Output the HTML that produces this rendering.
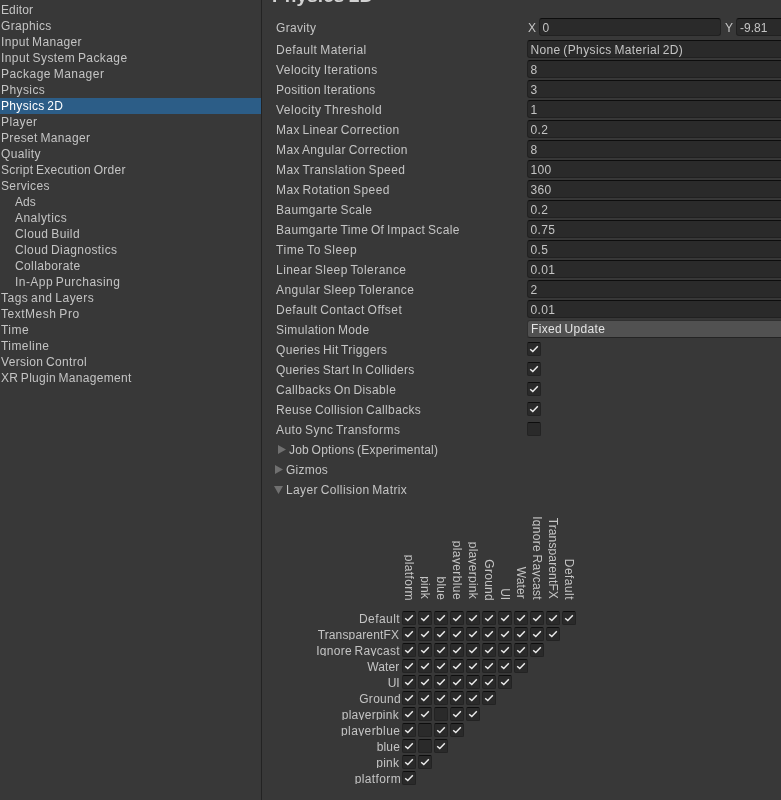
<!DOCTYPE html>
<html><head><meta charset="utf-8"><title>Project Settings</title>
<style>
html,body{margin:0;padding:0;}
body{will-change:transform;word-spacing:-1px;width:781px;height:800px;overflow:hidden;background:#383838;position:relative;font-family:"Liberation Sans",sans-serif;font-size:12px;color:#c4c4c4;}
.abs{position:absolute;}
.side{position:absolute;left:0;top:0;width:261px;height:800px;background:#383838;}
.div{position:absolute;left:261px;top:0;width:1px;height:800px;background:#232323;}
.si{position:absolute;left:0;width:261px;height:16px;line-height:16px;white-space:nowrap;letter-spacing:0.32px;}
.si.sel{background:#2c5d87;color:#ffffff;}
.lbl{position:absolute;left:276px;height:18px;line-height:18px;white-space:nowrap;letter-spacing:0.32px;}
.fld{position:absolute;left:527px;width:260px;height:16px;line-height:18px;border:1px solid #212121;border-top-color:#0d0d0d;border-radius:3px;background:#2a2a2a;padding-left:2.5px;box-sizing:content-box;white-space:nowrap;letter-spacing:0.32px;}
.dd{position:absolute;left:527px;width:260px;height:16px;line-height:17px;border:1px solid #303030;border-bottom-color:#242424;border-radius:3px;background:#515151;padding-left:3px;white-space:nowrap;color:#e4e4e4;letter-spacing:0.32px;}
.cb{position:absolute;width:12px;height:12px;border:1px solid #232323;border-top-color:#0d0d0d;border-radius:2px;background:#2a2a2a;}
.cb svg{position:absolute;left:-1px;top:-1px;}
.title{position:absolute;left:272px;top:-15px;letter-spacing:0.1px;font-size:19px;font-weight:bold;line-height:22px;color:#d2d2d2;white-space:nowrap;}
.tri{position:absolute;width:0;height:0;}
.rl{position:absolute;right:0;height:12.5px;line-height:16px;white-space:nowrap;letter-spacing:0.32px;overflow:hidden;}
.cl{position:absolute;height:12.5px;line-height:16px;white-space:nowrap;letter-spacing:0.32px;transform-origin:0 0;transform:rotate(90deg);overflow:hidden;}
</style></head><body>
<div class="side">
<div class="si" style="top:2px;padding-left:1px;box-sizing:border-box;letter-spacing:0.120px;">Editor</div>
<div class="si" style="top:18px;padding-left:1px;box-sizing:border-box;letter-spacing:0.320px;">Graphics</div>
<div class="si" style="top:34px;padding-left:1px;box-sizing:border-box;letter-spacing:0.337px;">Input Manager</div>
<div class="si" style="top:50px;padding-left:1px;box-sizing:border-box;letter-spacing:0.425px;">Input System Package</div>
<div class="si" style="top:66px;padding-left:1px;box-sizing:border-box;letter-spacing:0.463px;">Package Manager</div>
<div class="si" style="top:82px;padding-left:1px;box-sizing:border-box;letter-spacing:0.420px;">Physics</div>
<div class="si sel" style="top:98px;padding-left:1px;box-sizing:border-box;letter-spacing:0.320px;">Physics 2D</div>
<div class="si" style="top:114px;padding-left:1px;box-sizing:border-box;letter-spacing:0.400px;">Player</div>
<div class="si" style="top:130px;padding-left:1px;box-sizing:border-box;letter-spacing:0.351px;">Preset Manager</div>
<div class="si" style="top:146px;padding-left:1px;box-sizing:border-box;letter-spacing:0.353px;">Quality</div>
<div class="si" style="top:162px;padding-left:1px;box-sizing:border-box;letter-spacing:0.272px;">Script Execution Order</div>
<div class="si" style="top:178px;padding-left:1px;box-sizing:border-box;letter-spacing:0.349px;">Services</div>
<div class="si" style="top:194px;padding-left:15px;box-sizing:border-box;letter-spacing:0.020px;">Ads</div>
<div class="si" style="top:210px;padding-left:15px;box-sizing:border-box;letter-spacing:0.470px;">Analytics</div>
<div class="si" style="top:226px;padding-left:15px;box-sizing:border-box;letter-spacing:0.420px;">Cloud Build</div>
<div class="si" style="top:242px;padding-left:15px;box-sizing:border-box;letter-spacing:0.395px;">Cloud Diagnostics</div>
<div class="si" style="top:258px;padding-left:15px;box-sizing:border-box;letter-spacing:0.380px;">Collaborate</div>
<div class="si" style="top:274px;padding-left:15px;box-sizing:border-box;letter-spacing:0.445px;">In-App Purchasing</div>
<div class="si" style="top:290px;padding-left:1px;box-sizing:border-box;letter-spacing:0.477px;">Tags and Layers</div>
<div class="si" style="top:306px;padding-left:1px;box-sizing:border-box;letter-spacing:0.520px;">TextMesh Pro</div>
<div class="si" style="top:322px;padding-left:1px;box-sizing:border-box;letter-spacing:0.453px;">Time</div>
<div class="si" style="top:338px;padding-left:1px;box-sizing:border-box;letter-spacing:0.434px;">Timeline</div>
<div class="si" style="top:354px;padding-left:1px;box-sizing:border-box;letter-spacing:0.334px;">Version Control</div>
<div class="si" style="top:370px;padding-left:1px;box-sizing:border-box;letter-spacing:0.288px;">XR Plugin Management</div>
</div><div class="div"></div>
<div class="title">Physics 2D</div>
<div class="lbl" style="top:19px;letter-spacing:0.320px;">Gravity</div>
<div class="lbl" style="left:528px;top:19px">X</div>
<div class="fld" style="left:539px;width:177px;top:18px">0</div>
<div class="lbl" style="left:725px;top:19px">Y</div>
<div class="fld" style="left:736px;width:60px;top:18px;padding-left:3px;letter-spacing:0">-9.81</div>
<div class="lbl" style="top:41px;letter-spacing:0.480px;">Default Material</div>
<div class="fld" style="top:40px;letter-spacing:0.37px">None (Physics Material 2D)</div>
<div class="lbl" style="top:61px;letter-spacing:0.453px;">Velocity Iterations</div>
<div class="fld" style="top:60px;">8</div>
<div class="lbl" style="top:81px;letter-spacing:0.276px;">Position Iterations</div>
<div class="fld" style="top:80px;">3</div>
<div class="lbl" style="top:101px;letter-spacing:0.520px;">Velocity Threshold</div>
<div class="fld" style="top:100px;">1</div>
<div class="lbl" style="top:121px;letter-spacing:0.360px;">Max Linear Correction</div>
<div class="fld" style="top:120px;">0.2</div>
<div class="lbl" style="top:141px;letter-spacing:0.387px;">Max Angular Correction</div>
<div class="fld" style="top:140px;">8</div>
<div class="lbl" style="top:161px;letter-spacing:0.410px;">Max Translation Speed</div>
<div class="fld" style="top:160px;">100</div>
<div class="lbl" style="top:181px;letter-spacing:0.391px;">Max Rotation Speed</div>
<div class="fld" style="top:180px;">360</div>
<div class="lbl" style="top:201px;letter-spacing:0.349px;">Baumgarte Scale</div>
<div class="fld" style="top:200px;">0.2</div>
<div class="lbl" style="top:221px;letter-spacing:0.368px;">Baumgarte Time Of Impact Scale</div>
<div class="fld" style="top:220px;">0.75</div>
<div class="lbl" style="top:241px;letter-spacing:0.553px;">Time To Sleep</div>
<div class="fld" style="top:240px;">0.5</div>
<div class="lbl" style="top:261px;letter-spacing:0.453px;">Linear Sleep Tolerance</div>
<div class="fld" style="top:260px;">0.01</div>
<div class="lbl" style="top:281px;letter-spacing:0.429px;">Angular Sleep Tolerance</div>
<div class="fld" style="top:280px;">2</div>
<div class="lbl" style="top:301px;letter-spacing:0.472px;">Default Contact Offset</div>
<div class="fld" style="top:300px;">0.01</div>
<div class="lbl" style="top:321px;letter-spacing:0.334px;">Simulation Mode</div>
<div class="dd" style="top:320px">Fixed Update</div>
<div class="lbl" style="top:341px;letter-spacing:0.331px;">Queries Hit Triggers</div>
<div class="cb" style="left:527px;top:342px"><svg viewBox="0 0 14 14" width="14" height="14"><path d="M3.2 7.2 L5.8 9.6 L10.8 4.2" fill="none" stroke="#ececec" stroke-width="1.42" stroke-linecap="butt" stroke-linejoin="miter"/></svg></div>
<div class="lbl" style="top:361px;letter-spacing:0.288px;">Queries Start In Colliders</div>
<div class="cb" style="left:527px;top:362px"><svg viewBox="0 0 14 14" width="14" height="14"><path d="M3.2 7.2 L5.8 9.6 L10.8 4.2" fill="none" stroke="#ececec" stroke-width="1.42" stroke-linecap="butt" stroke-linejoin="miter"/></svg></div>
<div class="lbl" style="top:381px;letter-spacing:0.373px;">Callbacks On Disable</div>
<div class="cb" style="left:527px;top:382px"><svg viewBox="0 0 14 14" width="14" height="14"><path d="M3.2 7.2 L5.8 9.6 L10.8 4.2" fill="none" stroke="#ececec" stroke-width="1.42" stroke-linecap="butt" stroke-linejoin="miter"/></svg></div>
<div class="lbl" style="top:401px;letter-spacing:0.337px;">Reuse Collision Callbacks</div>
<div class="cb" style="left:527px;top:402px"><svg viewBox="0 0 14 14" width="14" height="14"><path d="M3.2 7.2 L5.8 9.6 L10.8 4.2" fill="none" stroke="#ececec" stroke-width="1.42" stroke-linecap="butt" stroke-linejoin="miter"/></svg></div>
<div class="lbl" style="top:421px;letter-spacing:0.415px;">Auto Sync Transforms</div>
<div class="cb" style="left:527px;top:422px"></div>
<svg class="abs" style="left:268px;top:438px" width="30" height="60" viewBox="0 0 30 60"><path d="M10 7 L18 11.5 L10 16 Z M7 27 L15 31.5 L7 36 Z M6 48 L15 48 L10.5 56 Z" fill="#707070"/></svg>
<div class="lbl" style="left:289px;top:441px;letter-spacing:0.224px;">Job Options (Experimental)</div>
<div class="lbl" style="left:286px;top:461px;letter-spacing:0.240px;">Gizmos</div>
<div class="lbl" style="left:286px;top:481px;letter-spacing:0.387px;">Layer Collision Matrix</div>
<div class="rl" style="top:611px;right:380.87px;letter-spacing:0.453px;">Default</div>
<div class="cb" style="left:402px;top:611px"><svg viewBox="0 0 14 14" width="14" height="14"><path d="M3.2 7.2 L5.8 9.6 L10.8 4.2" fill="none" stroke="#ececec" stroke-width="1.42" stroke-linecap="butt" stroke-linejoin="miter"/></svg></div>
<div class="cb" style="left:418px;top:611px"><svg viewBox="0 0 14 14" width="14" height="14"><path d="M3.2 7.2 L5.8 9.6 L10.8 4.2" fill="none" stroke="#ececec" stroke-width="1.42" stroke-linecap="butt" stroke-linejoin="miter"/></svg></div>
<div class="cb" style="left:434px;top:611px"><svg viewBox="0 0 14 14" width="14" height="14"><path d="M3.2 7.2 L5.8 9.6 L10.8 4.2" fill="none" stroke="#ececec" stroke-width="1.42" stroke-linecap="butt" stroke-linejoin="miter"/></svg></div>
<div class="cb" style="left:450px;top:611px"><svg viewBox="0 0 14 14" width="14" height="14"><path d="M3.2 7.2 L5.8 9.6 L10.8 4.2" fill="none" stroke="#ececec" stroke-width="1.42" stroke-linecap="butt" stroke-linejoin="miter"/></svg></div>
<div class="cb" style="left:466px;top:611px"><svg viewBox="0 0 14 14" width="14" height="14"><path d="M3.2 7.2 L5.8 9.6 L10.8 4.2" fill="none" stroke="#ececec" stroke-width="1.42" stroke-linecap="butt" stroke-linejoin="miter"/></svg></div>
<div class="cb" style="left:482px;top:611px"><svg viewBox="0 0 14 14" width="14" height="14"><path d="M3.2 7.2 L5.8 9.6 L10.8 4.2" fill="none" stroke="#ececec" stroke-width="1.42" stroke-linecap="butt" stroke-linejoin="miter"/></svg></div>
<div class="cb" style="left:498px;top:611px"><svg viewBox="0 0 14 14" width="14" height="14"><path d="M3.2 7.2 L5.8 9.6 L10.8 4.2" fill="none" stroke="#ececec" stroke-width="1.42" stroke-linecap="butt" stroke-linejoin="miter"/></svg></div>
<div class="cb" style="left:514px;top:611px"><svg viewBox="0 0 14 14" width="14" height="14"><path d="M3.2 7.2 L5.8 9.6 L10.8 4.2" fill="none" stroke="#ececec" stroke-width="1.42" stroke-linecap="butt" stroke-linejoin="miter"/></svg></div>
<div class="cb" style="left:530px;top:611px"><svg viewBox="0 0 14 14" width="14" height="14"><path d="M3.2 7.2 L5.8 9.6 L10.8 4.2" fill="none" stroke="#ececec" stroke-width="1.42" stroke-linecap="butt" stroke-linejoin="miter"/></svg></div>
<div class="cb" style="left:546px;top:611px"><svg viewBox="0 0 14 14" width="14" height="14"><path d="M3.2 7.2 L5.8 9.6 L10.8 4.2" fill="none" stroke="#ececec" stroke-width="1.42" stroke-linecap="butt" stroke-linejoin="miter"/></svg></div>
<div class="cb" style="left:562px;top:611px"><svg viewBox="0 0 14 14" width="14" height="14"><path d="M3.2 7.2 L5.8 9.6 L10.8 4.2" fill="none" stroke="#ececec" stroke-width="1.42" stroke-linecap="butt" stroke-linejoin="miter"/></svg></div>
<div class="rl" style="top:627px;right:381.98px;letter-spacing:0.137px;">TransparentFX</div>
<div class="cb" style="left:402px;top:627px"><svg viewBox="0 0 14 14" width="14" height="14"><path d="M3.2 7.2 L5.8 9.6 L10.8 4.2" fill="none" stroke="#ececec" stroke-width="1.42" stroke-linecap="butt" stroke-linejoin="miter"/></svg></div>
<div class="cb" style="left:418px;top:627px"><svg viewBox="0 0 14 14" width="14" height="14"><path d="M3.2 7.2 L5.8 9.6 L10.8 4.2" fill="none" stroke="#ececec" stroke-width="1.42" stroke-linecap="butt" stroke-linejoin="miter"/></svg></div>
<div class="cb" style="left:434px;top:627px"><svg viewBox="0 0 14 14" width="14" height="14"><path d="M3.2 7.2 L5.8 9.6 L10.8 4.2" fill="none" stroke="#ececec" stroke-width="1.42" stroke-linecap="butt" stroke-linejoin="miter"/></svg></div>
<div class="cb" style="left:450px;top:627px"><svg viewBox="0 0 14 14" width="14" height="14"><path d="M3.2 7.2 L5.8 9.6 L10.8 4.2" fill="none" stroke="#ececec" stroke-width="1.42" stroke-linecap="butt" stroke-linejoin="miter"/></svg></div>
<div class="cb" style="left:466px;top:627px"><svg viewBox="0 0 14 14" width="14" height="14"><path d="M3.2 7.2 L5.8 9.6 L10.8 4.2" fill="none" stroke="#ececec" stroke-width="1.42" stroke-linecap="butt" stroke-linejoin="miter"/></svg></div>
<div class="cb" style="left:482px;top:627px"><svg viewBox="0 0 14 14" width="14" height="14"><path d="M3.2 7.2 L5.8 9.6 L10.8 4.2" fill="none" stroke="#ececec" stroke-width="1.42" stroke-linecap="butt" stroke-linejoin="miter"/></svg></div>
<div class="cb" style="left:498px;top:627px"><svg viewBox="0 0 14 14" width="14" height="14"><path d="M3.2 7.2 L5.8 9.6 L10.8 4.2" fill="none" stroke="#ececec" stroke-width="1.42" stroke-linecap="butt" stroke-linejoin="miter"/></svg></div>
<div class="cb" style="left:514px;top:627px"><svg viewBox="0 0 14 14" width="14" height="14"><path d="M3.2 7.2 L5.8 9.6 L10.8 4.2" fill="none" stroke="#ececec" stroke-width="1.42" stroke-linecap="butt" stroke-linejoin="miter"/></svg></div>
<div class="cb" style="left:530px;top:627px"><svg viewBox="0 0 14 14" width="14" height="14"><path d="M3.2 7.2 L5.8 9.6 L10.8 4.2" fill="none" stroke="#ececec" stroke-width="1.42" stroke-linecap="butt" stroke-linejoin="miter"/></svg></div>
<div class="cb" style="left:546px;top:627px"><svg viewBox="0 0 14 14" width="14" height="14"><path d="M3.2 7.2 L5.8 9.6 L10.8 4.2" fill="none" stroke="#ececec" stroke-width="1.42" stroke-linecap="butt" stroke-linejoin="miter"/></svg></div>
<div class="rl" style="top:643px;right:381.03px;letter-spacing:0.289px;">Ignore Raycast</div>
<div class="cb" style="left:402px;top:643px"><svg viewBox="0 0 14 14" width="14" height="14"><path d="M3.2 7.2 L5.8 9.6 L10.8 4.2" fill="none" stroke="#ececec" stroke-width="1.42" stroke-linecap="butt" stroke-linejoin="miter"/></svg></div>
<div class="cb" style="left:418px;top:643px"><svg viewBox="0 0 14 14" width="14" height="14"><path d="M3.2 7.2 L5.8 9.6 L10.8 4.2" fill="none" stroke="#ececec" stroke-width="1.42" stroke-linecap="butt" stroke-linejoin="miter"/></svg></div>
<div class="cb" style="left:434px;top:643px"><svg viewBox="0 0 14 14" width="14" height="14"><path d="M3.2 7.2 L5.8 9.6 L10.8 4.2" fill="none" stroke="#ececec" stroke-width="1.42" stroke-linecap="butt" stroke-linejoin="miter"/></svg></div>
<div class="cb" style="left:450px;top:643px"><svg viewBox="0 0 14 14" width="14" height="14"><path d="M3.2 7.2 L5.8 9.6 L10.8 4.2" fill="none" stroke="#ececec" stroke-width="1.42" stroke-linecap="butt" stroke-linejoin="miter"/></svg></div>
<div class="cb" style="left:466px;top:643px"><svg viewBox="0 0 14 14" width="14" height="14"><path d="M3.2 7.2 L5.8 9.6 L10.8 4.2" fill="none" stroke="#ececec" stroke-width="1.42" stroke-linecap="butt" stroke-linejoin="miter"/></svg></div>
<div class="cb" style="left:482px;top:643px"><svg viewBox="0 0 14 14" width="14" height="14"><path d="M3.2 7.2 L5.8 9.6 L10.8 4.2" fill="none" stroke="#ececec" stroke-width="1.42" stroke-linecap="butt" stroke-linejoin="miter"/></svg></div>
<div class="cb" style="left:498px;top:643px"><svg viewBox="0 0 14 14" width="14" height="14"><path d="M3.2 7.2 L5.8 9.6 L10.8 4.2" fill="none" stroke="#ececec" stroke-width="1.42" stroke-linecap="butt" stroke-linejoin="miter"/></svg></div>
<div class="cb" style="left:514px;top:643px"><svg viewBox="0 0 14 14" width="14" height="14"><path d="M3.2 7.2 L5.8 9.6 L10.8 4.2" fill="none" stroke="#ececec" stroke-width="1.42" stroke-linecap="butt" stroke-linejoin="miter"/></svg></div>
<div class="cb" style="left:530px;top:643px"><svg viewBox="0 0 14 14" width="14" height="14"><path d="M3.2 7.2 L5.8 9.6 L10.8 4.2" fill="none" stroke="#ececec" stroke-width="1.42" stroke-linecap="butt" stroke-linejoin="miter"/></svg></div>
<div class="rl" style="top:659px;right:381.60px;letter-spacing:0.120px;">Water</div>
<div class="cb" style="left:402px;top:659px"><svg viewBox="0 0 14 14" width="14" height="14"><path d="M3.2 7.2 L5.8 9.6 L10.8 4.2" fill="none" stroke="#ececec" stroke-width="1.42" stroke-linecap="butt" stroke-linejoin="miter"/></svg></div>
<div class="cb" style="left:418px;top:659px"><svg viewBox="0 0 14 14" width="14" height="14"><path d="M3.2 7.2 L5.8 9.6 L10.8 4.2" fill="none" stroke="#ececec" stroke-width="1.42" stroke-linecap="butt" stroke-linejoin="miter"/></svg></div>
<div class="cb" style="left:434px;top:659px"><svg viewBox="0 0 14 14" width="14" height="14"><path d="M3.2 7.2 L5.8 9.6 L10.8 4.2" fill="none" stroke="#ececec" stroke-width="1.42" stroke-linecap="butt" stroke-linejoin="miter"/></svg></div>
<div class="cb" style="left:450px;top:659px"><svg viewBox="0 0 14 14" width="14" height="14"><path d="M3.2 7.2 L5.8 9.6 L10.8 4.2" fill="none" stroke="#ececec" stroke-width="1.42" stroke-linecap="butt" stroke-linejoin="miter"/></svg></div>
<div class="cb" style="left:466px;top:659px"><svg viewBox="0 0 14 14" width="14" height="14"><path d="M3.2 7.2 L5.8 9.6 L10.8 4.2" fill="none" stroke="#ececec" stroke-width="1.42" stroke-linecap="butt" stroke-linejoin="miter"/></svg></div>
<div class="cb" style="left:482px;top:659px"><svg viewBox="0 0 14 14" width="14" height="14"><path d="M3.2 7.2 L5.8 9.6 L10.8 4.2" fill="none" stroke="#ececec" stroke-width="1.42" stroke-linecap="butt" stroke-linejoin="miter"/></svg></div>
<div class="cb" style="left:498px;top:659px"><svg viewBox="0 0 14 14" width="14" height="14"><path d="M3.2 7.2 L5.8 9.6 L10.8 4.2" fill="none" stroke="#ececec" stroke-width="1.42" stroke-linecap="butt" stroke-linejoin="miter"/></svg></div>
<div class="cb" style="left:514px;top:659px"><svg viewBox="0 0 14 14" width="14" height="14"><path d="M3.2 7.2 L5.8 9.6 L10.8 4.2" fill="none" stroke="#ececec" stroke-width="1.42" stroke-linecap="butt" stroke-linejoin="miter"/></svg></div>
<div class="rl" style="top:675px;right:381.40px;letter-spacing:-0.080px;">UI</div>
<div class="cb" style="left:402px;top:675px"><svg viewBox="0 0 14 14" width="14" height="14"><path d="M3.2 7.2 L5.8 9.6 L10.8 4.2" fill="none" stroke="#ececec" stroke-width="1.42" stroke-linecap="butt" stroke-linejoin="miter"/></svg></div>
<div class="cb" style="left:418px;top:675px"><svg viewBox="0 0 14 14" width="14" height="14"><path d="M3.2 7.2 L5.8 9.6 L10.8 4.2" fill="none" stroke="#ececec" stroke-width="1.42" stroke-linecap="butt" stroke-linejoin="miter"/></svg></div>
<div class="cb" style="left:434px;top:675px"><svg viewBox="0 0 14 14" width="14" height="14"><path d="M3.2 7.2 L5.8 9.6 L10.8 4.2" fill="none" stroke="#ececec" stroke-width="1.42" stroke-linecap="butt" stroke-linejoin="miter"/></svg></div>
<div class="cb" style="left:450px;top:675px"><svg viewBox="0 0 14 14" width="14" height="14"><path d="M3.2 7.2 L5.8 9.6 L10.8 4.2" fill="none" stroke="#ececec" stroke-width="1.42" stroke-linecap="butt" stroke-linejoin="miter"/></svg></div>
<div class="cb" style="left:466px;top:675px"><svg viewBox="0 0 14 14" width="14" height="14"><path d="M3.2 7.2 L5.8 9.6 L10.8 4.2" fill="none" stroke="#ececec" stroke-width="1.42" stroke-linecap="butt" stroke-linejoin="miter"/></svg></div>
<div class="cb" style="left:482px;top:675px"><svg viewBox="0 0 14 14" width="14" height="14"><path d="M3.2 7.2 L5.8 9.6 L10.8 4.2" fill="none" stroke="#ececec" stroke-width="1.42" stroke-linecap="butt" stroke-linejoin="miter"/></svg></div>
<div class="cb" style="left:498px;top:675px"><svg viewBox="0 0 14 14" width="14" height="14"><path d="M3.2 7.2 L5.8 9.6 L10.8 4.2" fill="none" stroke="#ececec" stroke-width="1.42" stroke-linecap="butt" stroke-linejoin="miter"/></svg></div>
<div class="rl" style="top:691px;right:380.04px;letter-spacing:0.280px;">Ground</div>
<div class="cb" style="left:402px;top:691px"><svg viewBox="0 0 14 14" width="14" height="14"><path d="M3.2 7.2 L5.8 9.6 L10.8 4.2" fill="none" stroke="#ececec" stroke-width="1.42" stroke-linecap="butt" stroke-linejoin="miter"/></svg></div>
<div class="cb" style="left:418px;top:691px"><svg viewBox="0 0 14 14" width="14" height="14"><path d="M3.2 7.2 L5.8 9.6 L10.8 4.2" fill="none" stroke="#ececec" stroke-width="1.42" stroke-linecap="butt" stroke-linejoin="miter"/></svg></div>
<div class="cb" style="left:434px;top:691px"><svg viewBox="0 0 14 14" width="14" height="14"><path d="M3.2 7.2 L5.8 9.6 L10.8 4.2" fill="none" stroke="#ececec" stroke-width="1.42" stroke-linecap="butt" stroke-linejoin="miter"/></svg></div>
<div class="cb" style="left:450px;top:691px"><svg viewBox="0 0 14 14" width="14" height="14"><path d="M3.2 7.2 L5.8 9.6 L10.8 4.2" fill="none" stroke="#ececec" stroke-width="1.42" stroke-linecap="butt" stroke-linejoin="miter"/></svg></div>
<div class="cb" style="left:466px;top:691px"><svg viewBox="0 0 14 14" width="14" height="14"><path d="M3.2 7.2 L5.8 9.6 L10.8 4.2" fill="none" stroke="#ececec" stroke-width="1.42" stroke-linecap="butt" stroke-linejoin="miter"/></svg></div>
<div class="cb" style="left:482px;top:691px"><svg viewBox="0 0 14 14" width="14" height="14"><path d="M3.2 7.2 L5.8 9.6 L10.8 4.2" fill="none" stroke="#ececec" stroke-width="1.42" stroke-linecap="butt" stroke-linejoin="miter"/></svg></div>
<div class="rl" style="top:707px;right:382.07px;letter-spacing:0.253px;">playerpink</div>
<div class="cb" style="left:402px;top:707px"><svg viewBox="0 0 14 14" width="14" height="14"><path d="M3.2 7.2 L5.8 9.6 L10.8 4.2" fill="none" stroke="#ececec" stroke-width="1.42" stroke-linecap="butt" stroke-linejoin="miter"/></svg></div>
<div class="cb" style="left:418px;top:707px"><svg viewBox="0 0 14 14" width="14" height="14"><path d="M3.2 7.2 L5.8 9.6 L10.8 4.2" fill="none" stroke="#ececec" stroke-width="1.42" stroke-linecap="butt" stroke-linejoin="miter"/></svg></div>
<div class="cb" style="left:434px;top:707px"></div>
<div class="cb" style="left:450px;top:707px"><svg viewBox="0 0 14 14" width="14" height="14"><path d="M3.2 7.2 L5.8 9.6 L10.8 4.2" fill="none" stroke="#ececec" stroke-width="1.42" stroke-linecap="butt" stroke-linejoin="miter"/></svg></div>
<div class="cb" style="left:466px;top:707px"><svg viewBox="0 0 14 14" width="14" height="14"><path d="M3.2 7.2 L5.8 9.6 L10.8 4.2" fill="none" stroke="#ececec" stroke-width="1.42" stroke-linecap="butt" stroke-linejoin="miter"/></svg></div>
<div class="rl" style="top:723px;right:380.73px;letter-spacing:0.387px;">playerblue</div>
<div class="cb" style="left:402px;top:723px"><svg viewBox="0 0 14 14" width="14" height="14"><path d="M3.2 7.2 L5.8 9.6 L10.8 4.2" fill="none" stroke="#ececec" stroke-width="1.42" stroke-linecap="butt" stroke-linejoin="miter"/></svg></div>
<div class="cb" style="left:418px;top:723px"></div>
<div class="cb" style="left:434px;top:723px"><svg viewBox="0 0 14 14" width="14" height="14"><path d="M3.2 7.2 L5.8 9.6 L10.8 4.2" fill="none" stroke="#ececec" stroke-width="1.42" stroke-linecap="butt" stroke-linejoin="miter"/></svg></div>
<div class="cb" style="left:450px;top:723px"><svg viewBox="0 0 14 14" width="14" height="14"><path d="M3.2 7.2 L5.8 9.6 L10.8 4.2" fill="none" stroke="#ececec" stroke-width="1.42" stroke-linecap="butt" stroke-linejoin="miter"/></svg></div>
<div class="rl" style="top:739px;right:380.93px;letter-spacing:0.187px;">blue</div>
<div class="cb" style="left:402px;top:739px"><svg viewBox="0 0 14 14" width="14" height="14"><path d="M3.2 7.2 L5.8 9.6 L10.8 4.2" fill="none" stroke="#ececec" stroke-width="1.42" stroke-linecap="butt" stroke-linejoin="miter"/></svg></div>
<div class="cb" style="left:418px;top:739px"></div>
<div class="cb" style="left:434px;top:739px"><svg viewBox="0 0 14 14" width="14" height="14"><path d="M3.2 7.2 L5.8 9.6 L10.8 4.2" fill="none" stroke="#ececec" stroke-width="1.42" stroke-linecap="butt" stroke-linejoin="miter"/></svg></div>
<div class="rl" style="top:755px;right:381.93px;letter-spacing:0.187px;">pink</div>
<div class="cb" style="left:402px;top:755px"><svg viewBox="0 0 14 14" width="14" height="14"><path d="M3.2 7.2 L5.8 9.6 L10.8 4.2" fill="none" stroke="#ececec" stroke-width="1.42" stroke-linecap="butt" stroke-linejoin="miter"/></svg></div>
<div class="cb" style="left:418px;top:755px"><svg viewBox="0 0 14 14" width="14" height="14"><path d="M3.2 7.2 L5.8 9.6 L10.8 4.2" fill="none" stroke="#ececec" stroke-width="1.42" stroke-linecap="butt" stroke-linejoin="miter"/></svg></div>
<div class="rl" style="top:771px;right:379.94px;letter-spacing:0.377px;">platform</div>
<div class="cb" style="left:402px;top:771px"><svg viewBox="0 0 14 14" width="14" height="14"><path d="M3.2 7.2 L5.8 9.6 L10.8 4.2" fill="none" stroke="#ececec" stroke-width="1.42" stroke-linecap="butt" stroke-linejoin="miter"/></svg></div>
<div class="cl" id="c0" style="left:417px;top:501.06px;width:100px;text-align:right;letter-spacing:0.377px;">platform</div>
<div class="cl" id="c1" style="left:433px;top:499.07px;width:100px;text-align:right;letter-spacing:0.187px;">pink</div>
<div class="cl" id="c2" style="left:449px;top:500.07px;width:100px;text-align:right;letter-spacing:0.187px;">blue</div>
<div class="cl" id="c3" style="left:465px;top:500.27px;width:100px;text-align:right;letter-spacing:0.387px;">playerblue</div>
<div class="cl" id="c4" style="left:481px;top:498.93px;width:100px;text-align:right;letter-spacing:0.253px;">playerpink</div>
<div class="cl" id="c5" style="left:497px;top:500.96px;width:100px;text-align:right;letter-spacing:0.280px;">Ground</div>
<div class="cl" id="c6" style="left:513px;top:499.60px;width:100px;text-align:right;letter-spacing:-0.080px;">UI</div>
<div class="cl" id="c7" style="left:529px;top:499.40px;width:100px;text-align:right;letter-spacing:0.120px;">Water</div>
<div class="cl" id="c8" style="left:545px;top:499.97px;width:100px;text-align:right;letter-spacing:0.289px;">Ignore Raycast</div>
<div class="cl" id="c9" style="left:561px;top:499.02px;width:100px;text-align:right;letter-spacing:0.137px;">TransparentFX</div>
<div class="cl" id="c10" style="left:577px;top:500.13px;width:100px;text-align:right;letter-spacing:0.453px;">Default</div>
</body></html>
